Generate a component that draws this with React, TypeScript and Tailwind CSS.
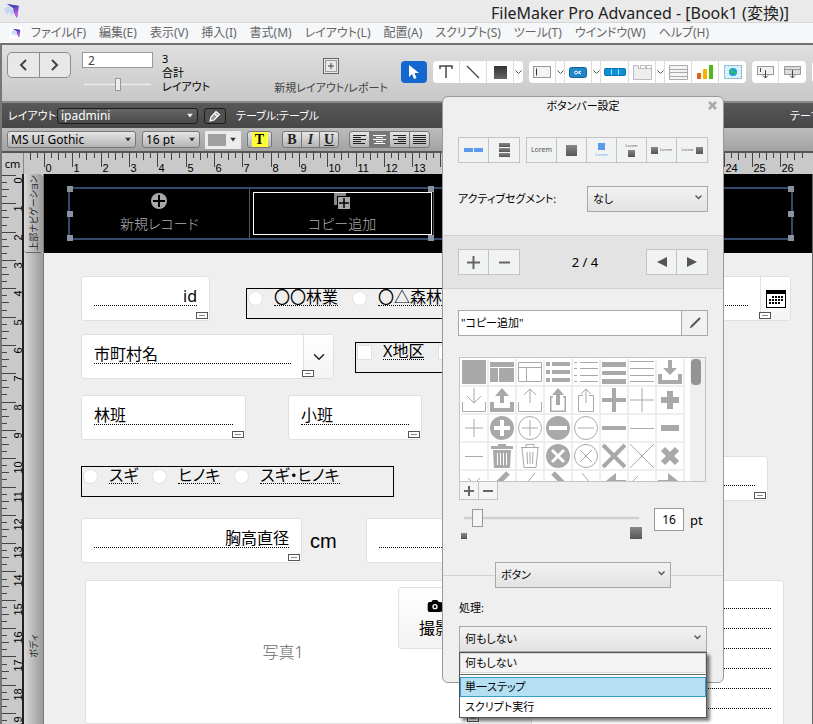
import { useState } from 'react';
import type { ReactNode } from 'react';
import clsx from 'clsx';
import { Camera, ChevronDown } from 'lucide-react';

const MENUS = [
  'ファイル(F)', '編集(E)', '表示(V)', '挿入(I)', '書式(M)', 'レイアウト(L)',
  '配置(A)', 'スクリプト(S)', 'ツール(T)', 'ウインドウ(W)', 'ヘルプ(H)',
];

const CM = 28.32;

interface Glyph {
  fill?: string;
  line?: string;
  width?: number;
}

const CIRCLE = 'M12 0a12 12 0 1 0 0 24a12 12 0 1 0 0-24z';
const RING = 'M12 .5a11.5 11.5 0 1 0 0 23a11.5 11.5 0 1 0 0-23z';

const GLYPHS: Glyph[] = [
  { fill: 'M0 0h24v24H0z' },
  { fill: 'M0 2h24v5H0zM0 8h8v14H0zM9 8h15v14H9z' },
  { line: 'M.5 2.5h23v19H.5zM.5 7.5h23M8.5 7.5v14', width: 1 },
  { fill: 'M0 2h4v4H0zM6 2h18v4H6zM0 10h4v4H0zM6 10h18v4H6zM0 18h4v4H0zM6 18h18v4H6z' },
  { line: 'M0 2.5h3M6 2.5h18M0 8.5h3M6 8.5h18M0 15.5h3M6 15.5h18M0 21.5h3M6 21.5h18', width: 1 },
  { fill: 'M0 2h24v5H0zM0 11h24v4H0zM0 19h24v5H0z' },
  { line: 'M0 1.5h24M0 8.5h24M0 15.5h24M0 21.5h24', width: 1 },
  { fill: 'M10 0h4v8h5l-7 7-7-7h5zM0 14h4v6h16v-6h4v10H0z' },

  { line: 'M12 0v14M5 8l7 7 7-7M.5 14v9.5h23V14', width: 1 },
  { fill: 'M10 15h4V8h5l-7-8-7 8h5zM0 14h4v6h16v-6h4v10H0z' },
  { line: 'M12 15V1M6 7l6-6 6 6M.5 14v9.5h23V14', width: 1 },
  { fill: 'M10 17h4V7h4l-6-7-6 7h4zM4 8h3v1.500H5.500v13h13v-13H17V8h3v16H4z' },
  { line: 'M12 15V1M7 6l5-5 5 5M9 7.500H4.500v16h15v-16H15', width: 1 },
  { fill: 'M10 0h4v10h10v4H14v10h-4V14H0v-4h10z' },
  { line: 'M12 0v24M0 12h24', width: 1 },
  { fill: 'M9 3h6v6h6v6h-6v6H9v-6H3V9h6z' },

  { line: 'M12 3v18M3 12h18', width: 1 },
  { fill: CIRCLE + 'M10 4v6H4v4h6v6h4v-6h6v-4h-6V4z' },
  { line: RING + 'M12 4v16M4 12h16', width: 1 },
  { fill: CIRCLE + 'M3 10v4h18v-4z' },
  { line: RING + 'M4 12h16', width: 1 },
  { fill: 'M0 10h24v4H0z' },
  { line: 'M0 12.500h24', width: 1 },
  { fill: 'M3 9h18v6H3z' },

  { line: 'M3 12.500h18', width: 1 },
  { fill: 'M8 0h8v2h7v3H1V2h7zM3 6h18l-1 18H4zM7 9v12h1V9zM10 9v12h1V9zM13 9v12h1V9zM16 9v12h1V9z' },
  { line: 'M3 3.500h18M8 3V.5h8V3M4 4l2 19.500h12L20 4M9 8l.5 12M12 8v12M15 8l-.5 12', width: 1 },
  { fill: CIRCLE + 'M7 5L5 7l5 5-5 5 2 2 5-5 5 5 2-2-5-5 5-5-2-2-5 5z' },
  { line: RING + 'M6 6l12 12M18 6L6 18', width: 1 },
  { line: 'M1 1l22 22M23 1L1 23', width: 4 },
  { line: 'M0 0l24 24M24 0L0 24', width: 1 },
  { line: 'M5 5l14 14M19 5L5 19', width: 6 },

  { line: 'M6 6l12 12M18 6L6 18', width: 1 },
  { line: 'M18 1L7 12l11 11', width: 5 },
  { line: 'M17 1L8 12l9 11', width: 1 },
  { line: 'M7 1l11 11L7 23', width: 5 },
  { line: 'M8 1l9 11-9 11', width: 1 },
  { fill: 'M0 12L14 1v7h10v8H14v7z' },
  { line: 'M8 4L0 12l8 8M0 12h24', width: 1 },
  { fill: 'M24 12L10 1v7H0v8h10v7z' },
];

function GlyphIcon({ glyph }: { glyph: Glyph }) {
  return (
    <svg viewBox="0 0 24 24" className="h-6 w-6 shrink-0 overflow-visible">
      {glyph.fill && <path d={glyph.fill} fill="#a9a9a9" fillRule="evenodd" />}
      {glyph.line && <path d={glyph.line} fill="none" stroke="#a9a9a9" strokeWidth={glyph.width} />}
    </svg>
  );
}

function AppLogo({ className }: { className: string }) {
  return (
    <svg viewBox="0 0 16 16" className={className}>
      <path d="M0 6l5-3 5 5-2 5-3-4-2 3z" fill="#bcd2f2" opacity=".8" />
      <path d="M3 1l12 2-2 12-3-5-1-5z" fill="#7b4fd0" />
      <path d="M3 1l12 2-5 2z" fill="#4340b8" />
      <path d="M10 9l4-1-1 7z" fill="#c85be8" />
    </svg>
  );
}

function Caret({ light }: { light?: boolean }) {
  return (
    <svg viewBox="0 0 8 5" className="pointer-events-none absolute top-1/2 right-1 h-[5px] w-2 -translate-y-1/2">
      <path d="M1 0h6L4 4z" fill={light ? '#f0f0f0' : '#333'} />
    </svg>
  );
}

function TitleBar() {
  return (
    <header className="flex h-[22px] shrink-0 items-center justify-between bg-[#eaeaea] pr-6 pl-1">
      <AppLogo className="h-4 w-4" />
      <h1 className="mt-1 text-base leading-5 text-[#222]">FileMaker Pro Advanced - [Book1 (変換)]</h1>
    </header>
  );
}

function MenuBar() {
  return (
    <nav className="flex h-[21px] shrink-0 items-center gap-[13px] overflow-hidden border-t border-[#d8d8d8] bg-[#f6f7f9] pl-[10px]">
      <span className="-mr-1 bg-white p-px"><AppLogo className="h-[10px] w-[10px]" /></span>
      {MENUS.map((m) => (
        <button key={m} type="button" className="shrink-0 text-[12px] leading-4 text-[#666]">{m}</button>
      ))}
    </nav>
  );
}

function Tool({ label, wide, children }: { label: string; wide?: boolean; children: ReactNode }) {
  return (
    <button
      type="button"
      aria-label={label}
      className={clsx('flex h-[22px] shrink-0 items-center justify-center border-r border-[#ddd] last:border-r-0', wide ? 'w-7' : 'w-[27px]')}
    >
      {children}
    </button>
  );
}

function ToolMenu({ label }: { label: string }) {
  return (
    <button type="button" aria-label={label} className="flex h-[22px] w-[9px] shrink-0 items-center justify-center border-r border-[#ddd] last:border-r-0">
      <svg viewBox="0 0 7 5" className="h-[5px] w-[7px]"><path d="M.5.5l3 3 3-3" fill="none" stroke="#555" /></svg>
    </button>
  );
}

function ToolGroup({ children }: { children: ReactNode }) {
  return <div className="flex shrink-0 overflow-hidden rounded bg-white">{children}</div>;
}

function Toolbar() {
  return (
    <div className="flex h-[58px] shrink-0 items-start overflow-hidden border-t-2 border-[#707070] bg-linear-to-b from-[#dfdfdf] to-[#c8c8c8] pl-[5px]">
      <div className="mt-[7px] flex h-[26px] w-16 shrink-0 rounded-[5px] border border-[#8c8c8c] bg-[#e8e8e8]">
        <button type="button" aria-label="前へ" className="flex flex-1 items-center justify-center border-r border-[#8c8c8c]">
          <svg viewBox="0 0 8 12" className="h-3 w-2"><path d="M7 1L2 6l5 5" fill="none" stroke="#444" strokeWidth="2" /></svg>
        </button>
        <button type="button" aria-label="次へ" className="flex flex-1 items-center justify-center">
          <svg viewBox="0 0 8 12" className="h-3 w-2"><path d="M1 1l5 5-5 5" fill="none" stroke="#444" strokeWidth="2" /></svg>
        </button>
      </div>
      <div className="mt-[7px] ml-[11px] w-[71px] shrink-0">
        <input aria-label="現在のレイアウト" defaultValue="2" className="block h-4 w-full border border-[#999] bg-white px-[5px] text-[12px] leading-3 text-[#444]" />
        <input
          type="range"
          aria-label="レイアウト位置"
          min={1}
          max={3}
          defaultValue={2}
          className="mx-[2px] mt-[10px] block h-[13px] w-[67px] appearance-none bg-linear-to-b from-transparent from-40% via-[#eee] via-50% to-transparent to-60% [&::-webkit-slider-thumb]:h-[13px] [&::-webkit-slider-thumb]:w-[6px] [&::-webkit-slider-thumb]:appearance-none [&::-webkit-slider-thumb]:border [&::-webkit-slider-thumb]:border-[#999] [&::-webkit-slider-thumb]:bg-[#eee]"
        />
      </div>
      <div className="mt-[7px] ml-[9px] w-[52px] shrink-0 text-[11px] leading-[14px] text-black">
        <p>3</p>
        <p>合計</p>
        <p className="whitespace-nowrap">レイアウト</p>
      </div>
      <button type="button" className="mt-[13px] ml-[60px] flex w-[114px] shrink-0 flex-col items-center gap-[6px] text-[11px] leading-4 whitespace-nowrap text-[#444]">
        <svg viewBox="0 0 16 16" className="h-4 w-4">
          <rect x=".5" y=".5" width="15" height="15" fill="#e8e8e8" stroke="#666" />
          <rect x="2.500" y="2.500" width="11" height="11" fill="none" stroke="#555" strokeDasharray="1 1" />
          <path d="M8 5v6M5 8h6" stroke="#444" />
        </svg>
        新規レイアウト/レポート
      </button>
      <div className="mt-4 ml-[13px] flex gap-[6px]">
        <button type="button" aria-label="選択" className="flex h-[22px] w-[26px] shrink-0 items-center justify-center rounded bg-[#1268cf]">
          <svg viewBox="0 0 12 16" className="h-4 w-3"><path d="M1 1v12l3-3 2 5 2.500-1-2-5H11z" fill="#fff" /></svg>
        </button>
        <ToolGroup>
          <Tool label="テキスト">
            <svg viewBox="0 0 14 14" className="h-[14px] w-[14px]"><path d="M1 4V1h12v3M7 1v12" fill="none" stroke="#444" strokeWidth="1.500" /></svg>
          </Tool>
          <Tool label="線">
            <svg viewBox="0 0 14 14" className="h-[14px] w-[14px]"><path d="M1 1l12 12" stroke="#444" strokeWidth="1.200" /></svg>
          </Tool>
          <Tool label="図形"><span className="h-[13px] w-[13px] bg-linear-to-b from-[#333] to-[#666]" /></Tool>
          <ToolMenu label="図形メニュー" />
        </ToolGroup>
        <ToolGroup>
          <Tool label="フィールド">
            <svg viewBox="0 0 18 12" className="h-3 w-[18px]"><rect x=".5" y=".5" width="17" height="11" fill="#f2f2f2" stroke="#999" /><path d="M3.500 2.500v7" stroke="#333" /></svg>
          </Tool>
          <ToolMenu label="フィールドメニュー" />
          <Tool label="ボタン">
            <svg viewBox="0 0 18 11" className="h-[11px] w-[18px]"><rect x=".5" y=".5" width="17" height="10" rx="2" fill="#1f86c9" stroke="#126399" /><circle cx="7" cy="5.500" r="1.500" fill="none" stroke="#fff" /><path d="M10 4v3M12 4l-2 1.500 2 1.500" stroke="#fff" fill="none" /></svg>
          </Tool>
          <ToolMenu label="ボタンメニュー" />
          <Tool label="ボタンバー" wide>
            <svg viewBox="0 0 22 8" className="h-2 w-[22px]"><rect x=".5" y=".5" width="21" height="7" rx="1" fill="#0a90d8" stroke="#0872b0" /><path d="M7.500 1v6M14.500 1v6" stroke="#9ad8f5" /></svg>
          </Tool>
          <Tool label="タブ">
            <svg viewBox="0 0 19 15" className="h-[15px] w-[19px]"><path d="M.5.5h5v3h13v11H.5z" fill="#eee" stroke="#bbb" /><path d="M7.500 3V.5h5V3M13.500 3V.5h5V4" fill="none" stroke="#bbb" /></svg>
          </Tool>
          <ToolMenu label="タブメニュー" />
          <Tool label="ポータル">
            <svg viewBox="0 0 19 15" className="h-[15px] w-[19px]"><path d="M.5.5h18v14H.5zM1 4.500h17M1 7.500h17M1 11.500h17" fill="#f4f4f4" stroke="#aaa" /></svg>
          </Tool>
          <Tool label="グラフ">
            <svg viewBox="0 0 16 14" className="h-[14px] w-4"><path d="M0 8h4v6H0z" fill="#e8601c" /><path d="M6 4h4v10H6z" fill="#f4b400" /><path d="M12 0h4v14h-4z" fill="#52b41e" /></svg>
          </Tool>
          <Tool label="Web ビューア">
            <svg viewBox="0 0 18 14" className="h-[14px] w-[18px]"><rect x=".5" y=".5" width="17" height="13" fill="#d9f1fb" stroke="#6aa0c0" strokeDasharray="2 1" /><circle cx="9" cy="7" r="4" fill="#1b9be0" /><path d="M7 4l3 1-1 3-3 1zM10 7l3 0-2 3z" fill="#35c04a" /></svg>
          </Tool>
        </ToolGroup>
        <ToolGroup>
          <Tool label="フィールド追加">
            <svg viewBox="0 0 17 14" className="h-[14px] w-[17px]"><rect x=".5" y="1.500" width="16" height="8" fill="#f0f0f0" stroke="#999" /><path d="M3.500 3v4M8.500 5v8M6 10.500l2.500 2.500 2.500-2.500" fill="none" stroke="#444" /></svg>
          </Tool>
          <Tool label="パート追加">
            <svg viewBox="0 0 17 14" className="h-[14px] w-[17px]"><path d="M.5 1.500h16v8H.5zM1 4.500h15" fill="#ddd" stroke="#999" /><path d="M8.500 5v8M6 10.500l2.500 2.500 2.500-2.500" fill="none" stroke="#444" /></svg>
          </Tool>
        </ToolGroup>
        <ToolGroup>
          <Tool label="その他"><span /></Tool>
        </ToolGroup>
      </div>
    </div>
  );
}

function LayoutBar() {
  return (
    <div className="flex h-[27px] shrink-0 items-center overflow-hidden border-t-2 border-[#8a8a8a] bg-linear-to-b from-[#585858] to-[#474747] pl-[6px] text-[11px] leading-4 text-white">
      <label htmlFor="layout-select" className="w-[49px] whitespace-nowrap">レイアウト:</label>
      <div className="relative w-[141px]">
        <select id="layout-select" className="block h-4 w-full appearance-none rounded-[3px] border border-[#1c1c1c] bg-linear-to-b from-[#666] to-[#4a4a4a] pl-[3px] text-[12px] leading-3 text-white">
          <option>ipadmini</option>
        </select>
        <Caret light />
      </div>
      <button type="button" aria-label="レイアウト管理" className="ml-[6px] flex h-4 w-[22px] items-center justify-center rounded-[3px] border border-[#1c1c1c] bg-[#505050]">
        <svg viewBox="0 0 12 12" className="h-3 w-3"><path d="M1 11l1-4 5-5.500 3.500 3L5 10zM5.500 3.500l3 3" fill="#999" stroke="#fff" strokeWidth="1.200" /></svg>
      </button>
      <span className="ml-[10px] whitespace-nowrap">テーブル:テーブル</span>
      <span className="ml-auto w-[23px] overflow-hidden whitespace-nowrap">テーマ</span>
    </div>
  );
}

const BEVEL = 'border border-[#777] bg-linear-to-b from-[#e6e6e6] to-[#b4b4b4]';

function AlignIcon({ rows, active }: { rows: [number, number][]; active?: boolean }) {
  return (
    <svg viewBox="0 0 13 10" className="h-[10px] w-[13px]">
      {rows.map(([x, w], i) => (
        <path key={i} d={`M${x} ${i * 2 + 0.5}h${w}`} stroke={active ? '#fff' : '#222'} />
      ))}
    </svg>
  );
}

function FormatBar() {
  const aligns: { label: string; rows: [number, number][] }[] = [
    { label: '左揃え', rows: [[0, 13], [0, 8], [0, 13], [0, 8], [0, 12]] },
    { label: '中央揃え', rows: [[0, 13], [3, 7], [0, 13], [3, 7], [1, 11]] },
    { label: '右揃え', rows: [[0, 13], [5, 8], [0, 13], [5, 8], [1, 12]] },
    { label: '両端揃え', rows: [[0, 13], [0, 13], [0, 13], [0, 13], [0, 13]] },
  ];
  return (
    <div className="flex h-[25px] shrink-0 items-center overflow-hidden border-b-2 border-[#555] bg-linear-to-b from-[#bcbcbc] to-[#a2a2a2] pl-[5px] text-[12px] text-black">
      <div className="relative w-[129px]">
        <select aria-label="フォント" className={clsx(BEVEL, 'block h-[17px] w-full appearance-none rounded-[3px] pl-[3px] leading-3')}>
          <option>MS UI Gothic</option>
        </select>
        <Caret />
      </div>
      <div className="relative ml-[6px] w-[58px]">
        <select aria-label="サイズ" className={clsx(BEVEL, 'block h-[17px] w-full appearance-none rounded-[3px] pl-[3px] leading-3')}>
          <option>16 pt</option>
        </select>
        <Caret />
      </div>
      <button type="button" aria-label="文字色" className="relative ml-[5px] h-[18px] w-9 bg-[#ececec] pl-[3px]">
        <span className="block h-3 w-[18px] bg-[#a0a0a0]" />
        <Caret />
      </button>
      <button type="button" className={clsx(BEVEL, 'ml-[6px] flex h-[17px] w-[25px] items-center justify-center rounded-[3px] font-["Liberation_Serif",serif] text-[14px] leading-[15px] font-bold')}>
        <span className="w-4 bg-[#ffff33]">T</span>
      </button>
      <div className={clsx(BEVEL, 'ml-[10px] flex h-[17px] w-[57px] divide-x divide-[#777] overflow-hidden rounded-[3px] font-["Liberation_Serif",serif] text-[14px] leading-[15px] font-bold text-[#222]')}>
        <button type="button" className="flex-1">B</button>
        <button type="button" className="flex-1 italic">I</button>
        <button type="button" className="flex-1 underline">U</button>
      </div>
      <div className={clsx(BEVEL, 'ml-[10px] flex h-[17px] w-[81px] divide-x divide-[#777] overflow-hidden rounded-[3px]')}>
        {aligns.map((a, i) => (
          <button key={a.label} type="button" aria-label={a.label} className={clsx('flex flex-1 items-center justify-center', i === 1 && 'bg-[#777]')}>
            <AlignIcon rows={a.rows} active={i === 1} />
          </button>
        ))}
      </div>
    </div>
  );
}

function Ruler({ vertical, length }: { vertical?: boolean; length: number }) {
  const origin = vertical ? 1 : 20;
  const ticks: ReactNode[] = [];
  for (let q = vertical ? 0 : -2; q < length * 4; q++) {
    const p = Math.round(origin + (q * CM) / 4) + 0.5;
    const len = q % 4 === 0 ? 14 : q % 2 === 0 ? 7 : 5;
    ticks.push(<path key={q} d={vertical ? `M0 ${p}h${len}` : `M${p} 0v${len}`} stroke="#444" />);
    if (q % 4 === 0) {
      const n = q / 4;
      ticks.push(
        vertical ? (
          <text key={`n${n}`} transform={`translate(20 ${p + (n > 9 ? 15 : 8)}) rotate(-90)`}>{n}</text>
        ) : (
          <text key={`n${n}`} x={p + 1} y={19}>{n}</text>
        ),
      );
    }
  }
  return (
    <svg
      className={clsx(
        'bg-[#c9c9c9] font-["Liberation_Sans",sans-serif] text-[11px]',
        vertical ? 'h-full w-[22px] shrink-0 border-r-2 border-[#222]' : 'h-[21px] min-w-0 flex-1',
      )}
    >
      {ticks}
    </svg>
  );
}

function FieldBadge({ className }: { className?: string }) {
  return (
    <span className={clsx('absolute bottom-px flex h-[7px] w-3 items-center border border-[#555] bg-white px-[2px]', className ?? 'right-px')}>
      <span className="h-px w-full bg-[#888]" />
    </span>
  );
}

interface FieldCardProps {
  name: string;
  className: string;
  right?: boolean;
  badge?: string;
  children?: ReactNode;
}

function FieldCard({ name, className, right, badge, children }: FieldCardProps) {
  return (
    <div className={clsx('relative flex h-[45px] shrink-0 items-stretch rounded-[3px] border border-[#e0e0e0] bg-white', className)}>
      <input
        aria-label={name || 'フィールド'}
        defaultValue={name}
        className={clsx('mx-3 mt-[9px] h-5 min-w-0 flex-1 border-b border-dotted border-black bg-transparent text-[16px] leading-5', right && 'text-right')}
      />
      {children}
      <FieldBadge className={badge} />
    </div>
  );
}

function ChoiceSet({ names, square, className }: { names: string[]; square?: boolean; className: string }) {
  return (
    <fieldset className={clsx('flex h-[31px] items-start gap-[14px] overflow-hidden border border-black pl-px', className)}>
      {names.map((n) => (
        <label key={n} className="flex shrink-0 items-start gap-[11px]">
          <input
            type={square ? 'checkbox' : 'radio'}
            name={names[0]}
            aria-label={n || '選択肢'}
            className={clsx('mt-[2px] h-[15px] w-[15px] appearance-none border border-[#e0e0e0] bg-white', !square && 'rounded-full')}
          />
          {n && <span className="border-b border-dotted border-black text-[16px] leading-4">{n}</span>}
        </label>
      ))}
    </fieldset>
  );
}

function Handle({ className }: { className: string }) {
  return <span className={clsx('absolute h-[6px] w-[6px] bg-[#8b93a0]', className)} />;
}

function NavPart() {
  return (
    <div className="h-[79px] shrink-0 bg-black pt-[13px] pr-[19px] pl-6">
      <div className="relative flex h-[53px] border-2 border-[#34496b] text-[14px] leading-4 font-light text-[#b0b0b0]">
        <div className="flex flex-1 flex-col items-center gap-[7px] border-r border-[#555] pt-1">
          <svg viewBox="0 0 16 16" className="h-4 w-4"><circle cx="8" cy="8" r="8" fill="#a8a8a8" /><path d="M8 2v12M2 8h12" stroke="#000" strokeWidth="2" /></svg>
          <span>新規レコード</span>
        </div>
        <div className="flex flex-1 border-r border-[#555] p-[3px] pr-px">
          <div className="flex flex-1 flex-col items-center gap-[7px] border border-white">
            <svg viewBox="0 0 16 16" className="h-4 w-4"><path d="M0 0h12v3H3v9H0z" fill="#888" /><path d="M4 4h12v12H4z" fill="#a8a8a8" /><path d="M10 5v10M5 10h10" stroke="#000" strokeWidth="1.500" /></svg>
            <span>コピー追加</span>
          </div>
        </div>
        <div className="flex-1" />
        <div className="flex-1" />
        <Handle className="-top-[3px] -left-[3px]" />
        <Handle className="top-[22px] -left-[3px]" />
        <Handle className="-bottom-[3px] -left-[3px]" />
        <Handle className="-top-[3px] left-1/2 -translate-x-1/2" />
        <Handle className="-bottom-[3px] left-1/2 -translate-x-1/2" />
        <Handle className="-top-[3px] -right-[3px]" />
        <Handle className="top-[22px] -right-[3px]" />
        <Handle className="-right-[3px] -bottom-[3px]" />
      </div>
    </div>
  );
}

function BodyPart() {
  return (
    <div className="flex shrink-0 flex-col pt-[23px] pl-[37px] text-black">
      <div className="flex items-start pr-[21px]">
        <FieldCard name="id" right className="w-[129px]" />
        <ChoiceSet names={['〇〇林業', '〇△森林']} className="mt-3 ml-9 w-[300px]" />
        <FieldCard name="" className="ml-auto w-[180px]" badge="right-[19px]">
          <button type="button" aria-label="カレンダー" className="flex w-[30px] items-center justify-center border-l border-[#e0e0e0] bg-linear-to-b from-white to-[#f4f4f4]">
            <svg viewBox="0 0 20 18" className="h-[18px] w-5">
              <path d="M0 0h20v18H0z" fill="#000" />
              <path d="M1 4h18v13H1z" fill="#fff" />
              <path d="M6 7h11M3 10h14M3 13h11" stroke="#000" strokeWidth="2" strokeDasharray="2 1" />
            </svg>
          </button>
        </FieldCard>
      </div>
      <div className="mt-[13px] flex items-start">
        <FieldCard name="市町村名" className="w-[253px]" badge="right-[19px]">
          <button type="button" aria-label="一覧" className="flex w-[30px] items-center justify-center border-l border-[#e0e0e0] bg-linear-to-b from-white to-[#f4f4f4]">
            <ChevronDown className="h-[18px] w-[18px] text-[#222]" />
          </button>
        </FieldCard>
        <ChoiceSet names={['X地区', '']} square className="mt-2 ml-[21px] w-[200px]" />
      </div>
      <div className="mt-4 flex gap-[42px]">
        <FieldCard name="林班" className="w-[165px]" />
        <FieldCard name="小班" className="w-[134px]" />
      </div>
      <div className="mt-4 flex items-start pr-11">
        <ChoiceSet names={['スギ', 'ヒノキ', 'スギ・ヒノキ']} className="mt-[10px] w-[313px]" />
        <FieldCard name="" className="ml-auto w-[200px]" />
      </div>
      <div className="mt-[17px] flex items-center">
        <FieldCard name="胸高直径" right className="w-[221px]" />
        <span className="ml-2 w-14 font-['Liberation_Sans',sans-serif] text-[20px] leading-5">cm</span>
        <FieldCard name="" className="w-[221px]" />
      </div>
      <div className="mt-[17px] flex items-start justify-between pr-7 pl-1">
        <div className="relative flex h-36 w-[396px] items-center justify-center rounded-[3px] border border-[#e0e0e0] bg-white">
          <span className="text-[16px] font-light text-[#666]">写真1</span>
          <button type="button" className="absolute top-[6px] right-2 flex h-[62px] w-[74px] flex-col items-center justify-center gap-1 rounded-[3px] border border-[#e0e0e0] bg-linear-to-b from-white to-[#f2f2f2] text-[16px] leading-5">
            <Camera className="h-4 w-4 fill-black text-black [&>circle]:fill-black [&>circle]:stroke-white" />
            撮影
          </button>
          <FieldBadge />
        </div>
        <div className="h-44 w-[253px] rounded-[3px] border border-[#e0e0e0] bg-white px-3 pt-[8px]">
          {[0, 1, 2, 3, 4, 5].map((n) => <div key={n} className="h-5 border-b border-dotted border-black" />)}
        </div>
      </div>
    </div>
  );
}

function PartTabs() {
  return (
    <div className="flex w-5 shrink-0 flex-col border-r border-[#777] text-[9px] leading-[18px] text-[#222]">
      <div className="flex h-[79px] shrink-0 items-center justify-center rounded-[3px] border-b border-[#666] bg-linear-to-r from-[#d8d8d8] to-[#9a9a9a]">
        <span className="-rotate-90 whitespace-nowrap">上部ナビゲーション</span>
      </div>
      <div className="flex flex-1 justify-center bg-linear-to-r from-[#d8d8d8] to-[#9a9a9a] pt-[384px]">
        <span className="h-[18px] -rotate-90 whitespace-nowrap">ボディ</span>
      </div>
    </div>
  );
}

function PanelSelect({ id, label, options, className }: { id: string; label?: string; options: string[]; className: string }) {
  return (
    <div className={clsx('relative', className)}>
      <select id={id} aria-label={label} className="block h-[26px] w-full appearance-none border border-[#a8a8a8] bg-linear-to-b from-[#f2f2f2] to-[#e2e2e2] pl-[5px] text-[11px] text-black">
        {options.map((o) => <option key={o}>{o}</option>)}
      </select>
      <svg viewBox="0 0 7 5" className="pointer-events-none absolute top-[9px] right-[6px] h-[5px] w-[7px]"><path d="M.5.5l3 3 3-3" fill="none" stroke="#555" strokeWidth="1.300" /></svg>
    </div>
  );
}

function Segments({ items }: { items: { label: string; icon: ReactNode }[] }) {
  return (
    <div className="flex h-[26px] divide-x divide-[#c4c4c4] border border-[#c4c4c4] bg-[#f1f2f2]">
      {items.map((s) => (
        <button key={s.label} type="button" aria-label={s.label} className="flex w-[30px] items-center justify-center gap-[2px] text-[#555]">
          {s.icon}
        </button>
      ))}
    </div>
  );
}

const Square = ({ className }: { className: string }) => <span className={clsx('shrink-0 bg-linear-to-b from-[#888] to-[#555]', className)} />;
const Lorem = ({ className }: { className: string }) => <span className={className}>Lorem</span>;

const ORIENTATIONS = [
  { label: '横', icon: <><span className="-mr-px h-1 w-[9px] bg-[#5a9bef]" /><span className="h-1 w-[9px] bg-[#5a9bef]" /></> },
  { label: '縦', icon: <span className="flex flex-col gap-px">{[0, 1, 2].map((n) => <Square key={n} className="h-1 w-[11px]" />)}</span> },
];

const SEGMENT_STYLES = [
  { label: 'ラベルのみ', icon: <Lorem className="text-[7px]" /> },
  { label: 'アイコンのみ', icon: <Square className="h-[11px] w-[11px]" /> },
  {
    label: 'アイコン上',
    icon: <span className="flex flex-col items-center gap-[3px]"><span className="h-[7px] w-[7px] bg-[#5a9bef]" /><Lorem className="text-[4px] leading-[4px] text-[#5a9bef]" /></span>,
  },
  {
    label: 'アイコン下',
    icon: <span className="flex flex-col items-center gap-[2px]"><Lorem className="text-[4px] leading-[4px]" /><Square className="h-[7px] w-[7px]" /></span>,
  },
  { label: 'アイコン左', icon: <><Square className="h-[7px] w-[7px]" /><Lorem className="text-[4px]" /></> },
  { label: 'アイコン右', icon: <><Lorem className="text-[4px]" /><Square className="h-[7px] w-[7px]" /></> },
];

const stroke = (d: string) => (
  <svg viewBox="0 0 13 13" className="h-[13px] w-[13px]"><path d={d} stroke="#666" strokeWidth="2" /></svg>
);
const arrow = (d: string) => (
  <svg viewBox="0 0 10 10" className="h-[10px] w-[10px]"><path d={d} fill="#555" /></svg>
);

function ButtonBarPanel({ onClose }: { onClose: () => void }) {
  const [action, setAction] = useState('単一ステップ');
  const item = (name: string) => (
    <li
      key={name}
      role="option"
      aria-selected={action === name}
      onMouseEnter={() => setAction(name)}
      className={clsx('h-5 border pl-1 leading-[18px]', action === name ? 'border-[#3a9cc8] bg-[#b5dff2]' : 'border-transparent')}
    >
      {name}
    </li>
  );

  return (
    <section className="absolute top-24 left-[442px] flex w-[282px] flex-col rounded-md border border-[#999] bg-[#efefef] pb-[30px] text-[11px] leading-4 text-black">
      <div className="relative mb-[23px] flex h-[17px] items-center justify-center">
        <h2>ボタンバー設定</h2>
        <button type="button" aria-label="閉じる" onClick={onClose} className="absolute top-1 right-[6px]">
          <svg viewBox="0 0 9 9" className="h-[9px] w-[9px]"><path d="M1 1l7 7M8 1L1 8" stroke="#aaa" strokeWidth="2.500" /></svg>
        </button>
      </div>
      <div className="flex justify-between px-[15px]">
        <Segments items={ORIENTATIONS} />
        <Segments items={SEGMENT_STYLES} />
      </div>
      <div className="mt-[23px] flex items-center justify-between px-[15px]">
        <label htmlFor="active-segment">アクティブセグメント:</label>
        <PanelSelect id="active-segment" options={['なし']} className="w-[121px]" />
      </div>
      <div className="mt-[23px] flex h-[54px] items-center justify-between border-y border-[#d2d2d2] bg-[#e3e3e3] px-[15px]">
        <Segments items={[{ label: '追加', icon: stroke('M6.500 0v13M0 6.500h13') }, { label: '削除', icon: stroke('M1 6.500h11') }]} />
        <span className="pl-1 text-[13px]">2 / 4</span>
        <Segments items={[{ label: '前', icon: arrow('M10 0v10L0 5z') }, { label: '次', icon: arrow('M0 0l10 5-10 5z') }]} />
      </div>
      <div className="mx-[15px] mt-[21px] flex h-[26px] border border-[#a8a8a8]">
        <input aria-label="セグメントラベル" defaultValue={'"コピー追加"'} className="min-w-0 flex-1 bg-white pl-[2px]" />
        <button type="button" aria-label="編集" className="flex w-[26px] items-center justify-center border-l border-[#a8a8a8] bg-[#f1f1f1]">
          <svg viewBox="0 0 12 12" className="h-3 w-3"><path d="M1 11l2-2" stroke="#555" /><path d="M2 10l9-9" stroke="#555" strokeWidth="2" /></svg>
        </button>
      </div>
      <div className="mr-[17px] ml-4 mt-[21px] flex h-[125px] overflow-hidden border border-[#c4c4c4]">
        <div className="grid auto-rows-[28px] grid-cols-[repeat(8,28px)_5px] overflow-hidden bg-white pt-px pl-px">
          {GLYPHS.map((g, i) => (
            <span key={i} className={clsx('flex items-center justify-center border-r-2 border-b-2 border-[#eee]', i % 8 === 0 && 'col-start-1')}>
              <GlyphIcon glyph={g} />
            </span>
          ))}
        </div>
        <div className="flex-1 bg-[#efefef] pl-px pt-px"><div className="h-[26px] w-[10px] rounded-[4px] bg-[#949494]" /></div>
      </div>
      <div className="ml-4 flex h-[18px] w-[39px] divide-x divide-[#c4c4c4] border border-t-0 border-[#c4c4c4] bg-[#f4f4f4]">
        <button type="button" aria-label="アイコン追加" className="flex flex-1 items-center justify-center"><svg viewBox="0 0 10 10" className="h-[10px] w-[10px]"><path d="M5 0v10M0 5h10" stroke="#666" strokeWidth="2" /></svg></button>
        <button type="button" aria-label="アイコン削除" className="flex flex-1 items-center justify-center"><svg viewBox="0 0 10 10" className="h-[10px] w-[10px]"><path d="M0 5h10" stroke="#666" strokeWidth="2" /></svg></button>
      </div>
      <div className="mr-[22px] ml-[18px] mt-2 flex h-8 items-start">
        <div className="w-[181px]">
          <input
            type="range"
            aria-label="アイコンサイズ"
            min={8}
            max={160}
            defaultValue={15}
            className="mx-[3px] mt-px block h-[18px] w-[175px] appearance-none bg-linear-to-b from-transparent from-40% via-[#c4c4c4] via-50% to-transparent to-60% [&::-webkit-slider-thumb]:h-[18px] [&::-webkit-slider-thumb]:w-[11px] [&::-webkit-slider-thumb]:appearance-none [&::-webkit-slider-thumb]:border [&::-webkit-slider-thumb]:border-[#999] [&::-webkit-slider-thumb]:bg-[#f4f4f4]"
          />
          <div className="flex items-end justify-between"><Square className="h-[6px] w-[6px]" /><Square className="h-3 w-3" /></div>
        </div>
        <input id="icon-size" defaultValue="16" className="ml-3 h-[23px] w-[30px] border border-[#999] bg-white text-center text-[12px]" />
        <label htmlFor="icon-size" className="ml-[6px] mt-1 text-[13px]">pt</label>
      </div>
      <div className="mt-[22px] flex items-center">
        <span className="h-px flex-1 bg-[#d2d2d2]" />
        <PanelSelect id="segment-type" label="種類" options={['ボタン']} className="w-[176px]" />
        <span className="h-px flex-1 bg-[#d2d2d2]" />
      </div>
      <label htmlFor="action" className="mt-3 ml-4">処理:</label>
      <div className="relative mt-[10px] mr-4 ml-4">
        <PanelSelect id="action" options={['何もしない', '単一ステップ', 'スクリプト実行']} className="w-full" />
        <ul role="listbox" aria-label="処理" className="absolute top-[26px] left-0 w-full border border-[#555] bg-white shadow-[3px_3px_3px_rgba(0,0,0,0.5)]">
          <li role="option" aria-selected={false} className="h-5 border border-[#d8d8d8] bg-[#f4f4f4] pl-1 leading-[18px]">何もしない</li>
          <li role="separator" className="my-px h-[2px] border-t border-[#666]" />
          {['単一ステップ', 'スクリプト実行'].map(item)}
        </ul>
      </div>
    </section>
  );
}

export default function App() {
  const [panelOpen, setPanelOpen] = useState(true);

  return (
    <div className="relative flex h-screen flex-col overflow-hidden bg-[#efefef] font-['Noto_Sans','Noto_Sans_CJK_JP',sans-serif] [font-feature-settings:'palt']">
      <TitleBar />
      <MenuBar />
      <div className="flex min-h-0 flex-1 flex-col border-l-2 border-[#777]">
        <Toolbar />
        <LayoutBar />
        <FormatBar />
        <div className="flex h-[21px] shrink-0 bg-[#c9c9c9]">
          <span className="w-[22px] border-r border-[#888] text-center text-[11px] leading-[22px] text-black">cm</span>
          <Ruler length={27} />
        </div>
        <main className="flex min-h-0 flex-1">
          <Ruler vertical length={20} />
          <PartTabs />
          <div className="flex min-w-0 flex-1 flex-col overflow-hidden border-r border-[#666] bg-[#efefef]">
            <NavPart />
            <BodyPart />
          </div>
        </main>
      </div>
      {panelOpen && <ButtonBarPanel onClose={() => setPanelOpen(false)} />}
    </div>
  );
}
